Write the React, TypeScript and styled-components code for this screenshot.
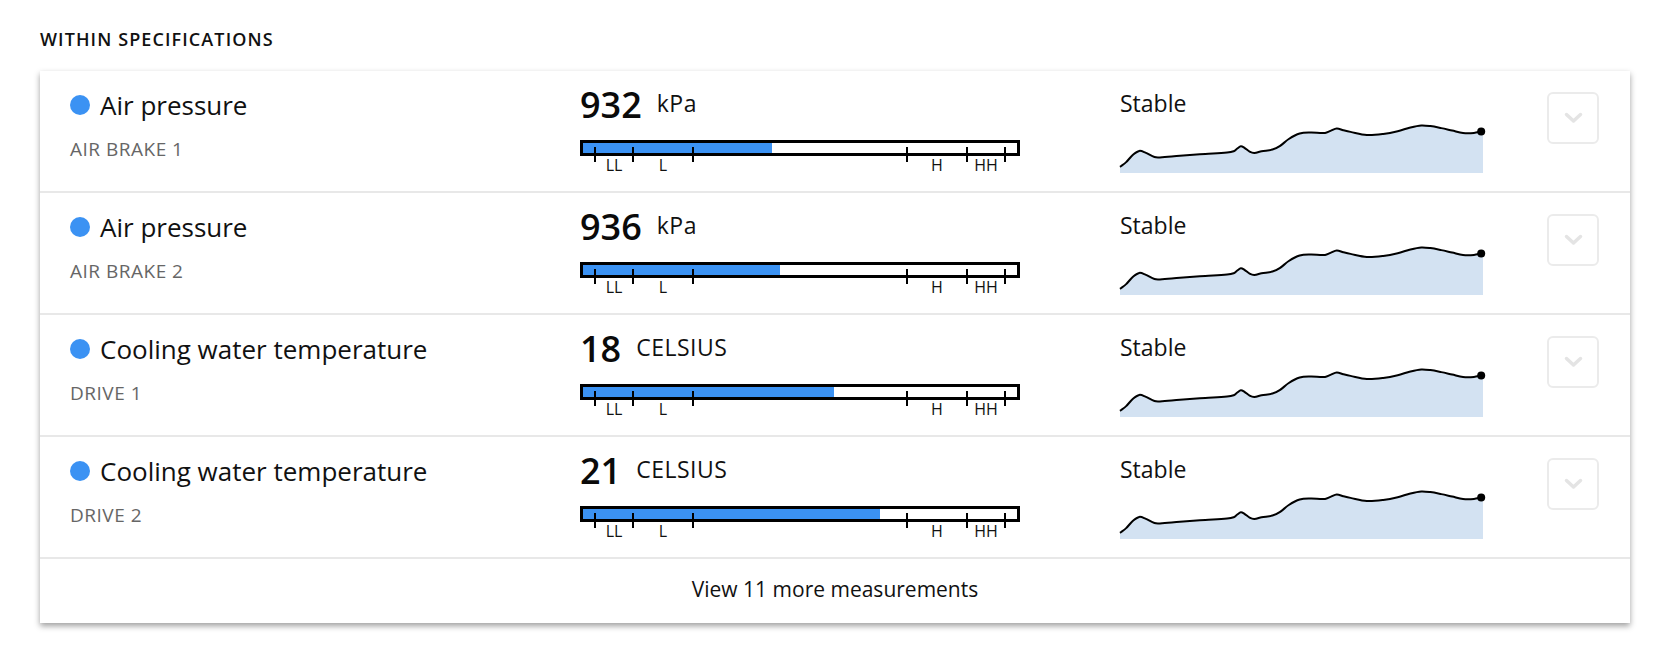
import React from "react";
import styled, { createGlobalStyle } from "styled-components";

const GlobalStyle = createGlobalStyle`
  html, body { margin: 0; padding: 0; background: #ffffff; }
  body {
    font-family: "Open Sans", "Noto Sans", Arial, sans-serif;
    color: #111111;
  }
  * { box-sizing: border-box; }
`;

const Page = styled.div`
  width: 1670px;
  padding: 27px 40px 40px;
`;

const SectionTitle = styled.h2`
  margin: 0 0 20px;
  font-size: 18px;
  line-height: 24px;
  font-weight: 600;
  letter-spacing: 1.1px;
  color: #111111;
  text-transform: uppercase;
`;

const Card = styled.section`
  background: #ffffff;
  box-shadow: 0 3px 6px rgba(0, 0, 0, 0.38);
`;

const Row = styled.div`
  display: grid;
  grid-template-columns: 510px 540px 1fr 52px;
  align-items: start;
  height: 122px;
  padding: 0 31px 0 30px;
  border-bottom: 2px solid #e8e8e8;
`;

const NameCell = styled.div`
  padding-top: 18px;
`;

const NameLine = styled.div`
  display: flex;
  align-items: center;
  gap: 10px;
  font-size: 26px;
  line-height: 32px;
  color: #111111;
`;

const Dot = styled.span`
  flex: none;
  width: 20px;
  height: 20px;
  border-radius: 50%;
  background: #3b92f3;
`;

const Location = styled.div`
  margin-top: 16px;
  font-size: 19px;
  line-height: 24px;
  letter-spacing: 0.5px;
  color: #666666;
  text-transform: uppercase;
`;

const ValueCell = styled.div`
  padding-top: 13px;
`;

const Reading = styled.div`
  display: flex;
  align-items: flex-start;
  gap: 15px;
`;

const Amount = styled.span`
  font-size: 36px;
  line-height: 42px;
  font-weight: 600;
  color: #0a0a0a;
`;

const Unit = styled.span`
  margin-top: 5px;
  font-size: 23px;
  line-height: 28px;
  letter-spacing: 0.5px;
  color: #111111;
`;

const Gauge = styled.div`
  margin-top: 14px;
  width: 440px;
`;

const Bar = styled.div`
  position: relative;
  height: 16px;
  border: 3px solid #000000;
  background: #ffffff;
`;

const Fill = styled.div`
  height: 100%;
  background: #3b92f3;
`;

const Tick = styled.span<{ $at: number }>`
  position: absolute;
  top: 4px;
  left: ${(p) => p.$at - 4}px;
  width: 2px;
  height: 15px;
  background: #000000;
`;

const Scale = styled.div`
  display: grid;
  grid-template-columns: 15px 38px 60px 1fr 60px 38px 15px;
  font-size: 16px;
  line-height: 18px;
  text-align: center;
  color: #111111;
`;

const TrendCell = styled.div`
  padding-top: 18px;
`;

const TrendLabel = styled.div`
  font-size: 23px;
  line-height: 28px;
  color: #111111;
`;

const Spark = styled.svg`
  display: block;
  margin-top: 4px;
  overflow: visible;
`;

const ExpandButton = styled.button`
  margin-top: 21px;
  width: 52px;
  height: 52px;
  padding: 0;
  border: 2px solid #ebebeb;
  border-radius: 6px;
  background: #ffffff;
  display: flex;
  align-items: center;
  justify-content: center;
  cursor: pointer;
`;

const Footer = styled.div`
  height: 64px;
  padding-top: 16px;
  text-align: center;
  font-size: 21px;
  line-height: 28px;
  color: #111111;
`;

const RAW: [number, number][] = [
  [55, 290], [72, 276], [90, 255], [108, 243], [125, 248], [150, 261],
  [165, 262], [220, 257], [290, 252], [350, 248], [368, 244], [378, 236],
  [388, 229], [398, 234], [412, 245], [425, 249], [445, 244], [475, 239],
  [495, 229], [520, 208], [550, 192], [580, 189], [620, 190], [635, 184],
  [652, 177], [670, 182], [690, 187], [735, 196], [780, 193], [820, 185],
  [855, 174], [885, 168], [910, 170], [940, 176], [970, 183], [1000, 190],
  [1030, 190], [1050, 186],
];

const SX = 0.363;
const SY = 0.34;
const W = 363;
const H = 52;
const PTS = RAW.map(([x, y]) => [(x - 55) * SX, (y - 155) * SY] as [number, number]);

function smoothPath(p: [number, number][]): string {
  const n = p.length;
  const slope = (i: number) => {
    const a = p[Math.max(0, i - 1)];
    const b = p[Math.min(n - 1, i + 1)];
    return (b[1] - a[1]) / (b[0] - a[0]);
  };
  let d = `M${p[0][0].toFixed(2)},${p[0][1].toFixed(2)}`;
  for (let i = 0; i < n - 1; i++) {
    const p1 = p[i];
    const p2 = p[i + 1];
    const dx = (p2[0] - p1[0]) / 3;
    const c1x = p1[0] + dx;
    const c1y = p1[1] + slope(i) * dx;
    const c2x = p2[0] - dx;
    const c2y = p2[1] - slope(i + 1) * dx;
    d += ` C${c1x.toFixed(2)},${c1y.toFixed(2)} ${c2x.toFixed(2)},${c2y.toFixed(2)} ${p2[0].toFixed(2)},${p2[1].toFixed(2)}`;
  }
  return d;
}

const LINE = smoothPath(PTS);
const LAST = PTS[PTS.length - 1];
const AREA = `${LINE} L${W},${LAST[1].toFixed(2)} L${W},${H} L0,${H} Z`;

const Sparkline: React.FC = () => (
  <Spark width={W} height={H} viewBox={`0 0 ${W} ${H}`}>
    <path d={AREA} fill="#d3e2f2" />
    <path d={LINE} fill="none" stroke="#000" strokeWidth={2} strokeLinejoin="round" />
    <circle cx={LAST[0]} cy={LAST[1]} r={4} fill="#000" />
  </Spark>
);

const Chevron: React.FC = () => (
  <svg width="19" height="12" viewBox="0 0 19 12">
    <polyline
      points="2.5,2.5 9.5,9 16.5,2.5"
      fill="none"
      stroke="#e4e4e4"
      strokeWidth={3.5}
      strokeLinecap="round"
      strokeLinejoin="round"
    />
  </svg>
);

const TICKS = [15, 53, 113, 327, 387, 425];

type Measurement = {
  name: string;
  location: string;
  value: string;
  unit: string;
  fill: number;
  trend: string;
};

const DATA: Measurement[] = [
  { name: "Air pressure", location: "Air brake 1", value: "932", unit: "kPa", fill: 43.5, trend: "Stable" },
  { name: "Air pressure", location: "Air brake 2", value: "936", unit: "kPa", fill: 45.3, trend: "Stable" },
  { name: "Cooling water temperature", location: "Drive 1", value: "18", unit: "CELSIUS", fill: 57.8, trend: "Stable" },
  { name: "Cooling water temperature", location: "Drive 2", value: "21", unit: "CELSIUS", fill: 68.4, trend: "Stable" },
];

const MeasurementRow: React.FC<{ m: Measurement }> = ({ m }) => (
  <Row>
    <NameCell>
      <NameLine>
        <Dot />
        <span>{m.name}</span>
      </NameLine>
      <Location>{m.location}</Location>
    </NameCell>
    <ValueCell>
      <Reading>
        <Amount>{m.value}</Amount>
        <Unit>{m.unit}</Unit>
      </Reading>
      <Gauge>
        <Bar>
          <Fill style={{ width: `${m.fill}%` }} />
          {TICKS.map((t) => (
            <Tick key={t} $at={t} />
          ))}
        </Bar>
        <Scale>
          <span />
          <span>LL</span>
          <span>L</span>
          <span />
          <span>H</span>
          <span>HH</span>
          <span />
        </Scale>
      </Gauge>
    </ValueCell>
    <TrendCell>
      <TrendLabel>{m.trend}</TrendLabel>
      <Sparkline />
    </TrendCell>
    <ExpandButton aria-label="Expand">
      <Chevron />
    </ExpandButton>
  </Row>
);

export default function App() {
  return (
    <>
      <GlobalStyle />
      <Page>
        <SectionTitle>Within specifications</SectionTitle>
        <Card>
          {DATA.map((m, i) => (
            <MeasurementRow key={i} m={m} />
          ))}
          <Footer>View 11 more measurements</Footer>
        </Card>
      </Page>
    </>
  );
}
